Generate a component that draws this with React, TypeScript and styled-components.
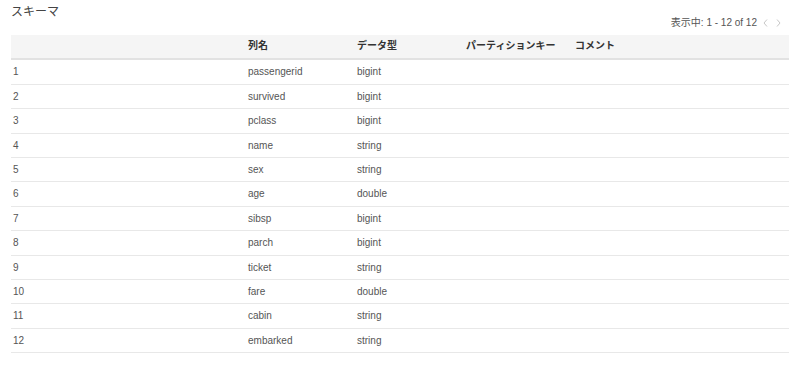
import React from "react";
import styled, { createGlobalStyle } from "styled-components";

const Global = createGlobalStyle`
  html, body { margin: 0; padding: 0; background: #fff; }
  body { font-family: "Liberation Sans", Arial, "Noto Sans CJK JP", sans-serif; color: #333; }
`;

const Page = styled.div`
  padding: 0 11px;
`;

const Header = styled.div`
  display: flex;
  justify-content: space-between;
  height: 30px;
  margin-bottom: 5px;
`;

const Title = styled.h2`
  align-self: flex-start;
  margin: 0;
  padding-top: 4px;
  font-size: 12px;
  line-height: 17px;
  font-weight: normal;
  color: #444;
  font-family: "Liberation Sans", "Noto Sans CJK JP", sans-serif;
`;

const Pager = styled.div`
  align-self: flex-end;
  display: flex;
  align-items: center;
  gap: 6px;
  padding-right: 8px;
  height: 14px;
  font-size: 10px;
  line-height: 14px;
  color: #555;
  font-family: "Liberation Sans", "Noto Sans CJK JP", sans-serif;
`;

const Arrows = styled.div`
  display: flex;
  align-items: center;
  gap: 8px;
`;

const Table = styled.table`
  width: 100%;
  border-collapse: collapse;
  table-layout: fixed;
  font-size: 10px;
  line-height: 14.4px;
`;

const HeadCell = styled.th`
  text-align: left;
  font-weight: bold;
  color: #333;
  background: #f5f5f5;
  padding: 4px 2px 5px;
  border-bottom: 2px solid #e2e2e2;
  font-family: "Liberation Sans", "Noto Sans CJK JP", sans-serif;
`;

const Cell = styled.td`
  padding: 5px 2px 4px;
  border-bottom: 1px solid #e8e8e8;
  color: #555;
  white-space: nowrap;
`;

const Chevron = ({ dir }: { dir: "left" | "right" }) => (
  <svg width="5" height="8" viewBox="0 0 5 8">
    <path
      d={dir === "left" ? "M4 0.5 L1 4 L4 7.5" : "M1 0.5 L4 4 L1 7.5"}
      fill="none"
      stroke="#c8c8c8"
      strokeWidth="1"
    />
  </svg>
);

const rows: [string, string][] = [
  ["passengerid", "bigint"],
  ["survived", "bigint"],
  ["pclass", "bigint"],
  ["name", "string"],
  ["sex", "string"],
  ["age", "double"],
  ["sibsp", "bigint"],
  ["parch", "bigint"],
  ["ticket", "string"],
  ["fare", "double"],
  ["cabin", "string"],
  ["embarked", "string"],
];

export default function App() {
  return (
    <Page>
      <Global />
      <Header>
        <Title>スキーマ</Title>
        <Pager>
          <span>表示中: 1 - 12 of 12</span>
          <Arrows>
            <Chevron dir="left" />
            <Chevron dir="right" />
          </Arrows>
        </Pager>
      </Header>
      <Table>
        <colgroup>
          <col style={{ width: 235 }} />
          <col style={{ width: 109 }} />
          <col style={{ width: 109 }} />
          <col style={{ width: 109 }} />
          <col />
        </colgroup>
        <thead>
          <tr>
            <HeadCell></HeadCell>
            <HeadCell>列名</HeadCell>
            <HeadCell>データ型</HeadCell>
            <HeadCell>パーティションキー</HeadCell>
            <HeadCell>コメント</HeadCell>
          </tr>
        </thead>
        <tbody>
          {rows.map(([name, type], i) => (
            <tr key={name}>
              <Cell>{i + 1}</Cell>
              <Cell>{name}</Cell>
              <Cell>{type}</Cell>
              <Cell></Cell>
              <Cell></Cell>
            </tr>
          ))}
        </tbody>
      </Table>
    </Page>
  );
}
